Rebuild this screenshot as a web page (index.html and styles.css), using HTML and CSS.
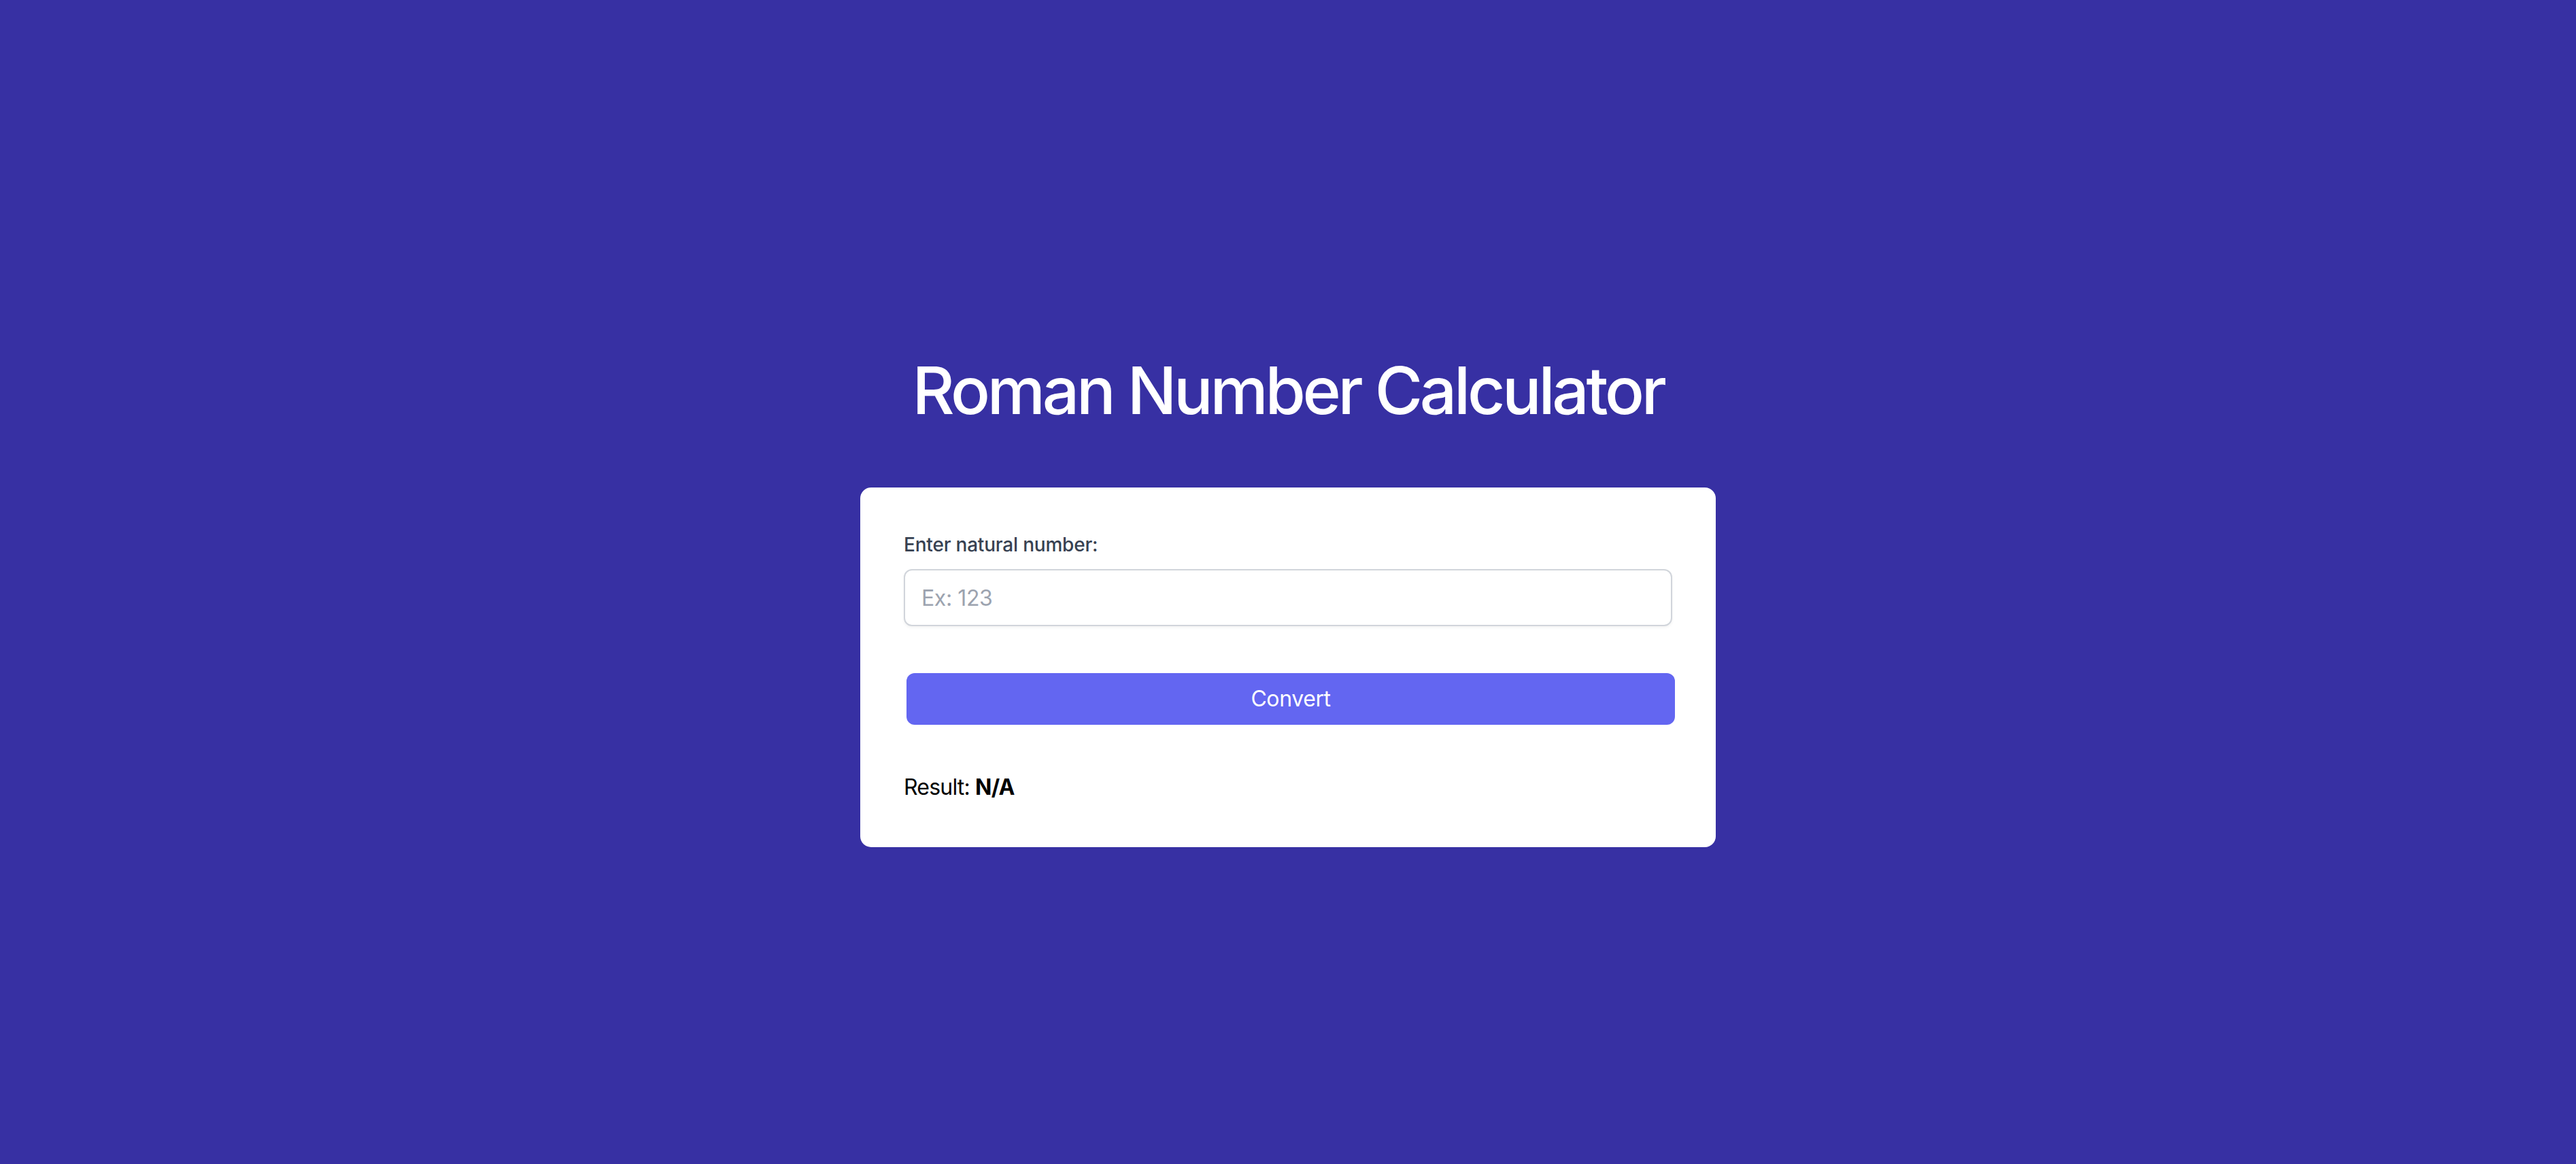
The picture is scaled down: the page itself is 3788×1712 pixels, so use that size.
FILE: index.html
```html
<!DOCTYPE html>
<html lang="en">
<head>
<meta charset="utf-8">
<title>Roman Number Calculator</title>
<link rel="stylesheet" href="styles.css">
</head>
<body>
<main class="page">
  <h1 class="title">Roman Number Calculator</h1>
  <form class="card">
    <label class="label" for="num">Enter natural number:</label>
    <input class="input" id="num" type="text" placeholder="Ex: 123">
    <button class="button" type="button">Convert</button>
    <p class="result">Result: <strong>N/A</strong></p>
  </form>
</main>
</body>
</html>
```

FILE: styles.css
```css
* { box-sizing: border-box; }
html, body { margin: 0; padding: 0; }
body {
  background: #3730a3;
  font-family: Inter, "Noto Sans", "Liberation Sans", sans-serif;
}
.page {
  min-height: 100vh;
  display: flex;
  flex-direction: column;
  align-items: center;
  justify-content: center;
  padding-top: 60px;
}
.title {
  margin: 0 0 95px 0;
  font-size: 96px;
  line-height: 96px;
  font-weight: 500;
  color: #ffffff;
  letter-spacing: -4.3px;
}
.card {
  width: 1258px;
  background: #ffffff;
  border-radius: 16px;
  padding: 64px;
  display: flex;
  flex-direction: column;
  margin: 0;
}
.label {
  font-size: 28px;
  line-height: 40px;
  font-weight: 500;
  color: #374151;
  letter-spacing: -0.2px;
}
.input {
  margin-top: 16px;
  width: 100%;
  height: 84px;
  border: 2px solid #d1d5db;
  border-radius: 12px;
  padding: 0 24px;
  font-family: inherit;
  font-size: 32px;
  color: #111827;
  box-shadow: 0 2px 4px rgba(0,0,0,0.05);
  outline: none;
}
.input::placeholder { color: #9ca3af; letter-spacing: -0.4px; }
.button {
  margin-top: 69px;
  margin-left: 4px;
  width: 100%;
  height: 76px;
  border: none;
  border-radius: 12px;
  background: #6366f1;
  color: #ffffff;
  font-family: inherit;
  font-size: 32px;
  line-height: 48px;
  font-weight: 400;
  letter-spacing: -0.4px;
}
.result {
  margin: 68px 0 0 0;
  font-size: 32px;
  line-height: 48px;
  color: #000000;
  letter-spacing: -0.8px;
}
.result strong { font-weight: 700; }
```
